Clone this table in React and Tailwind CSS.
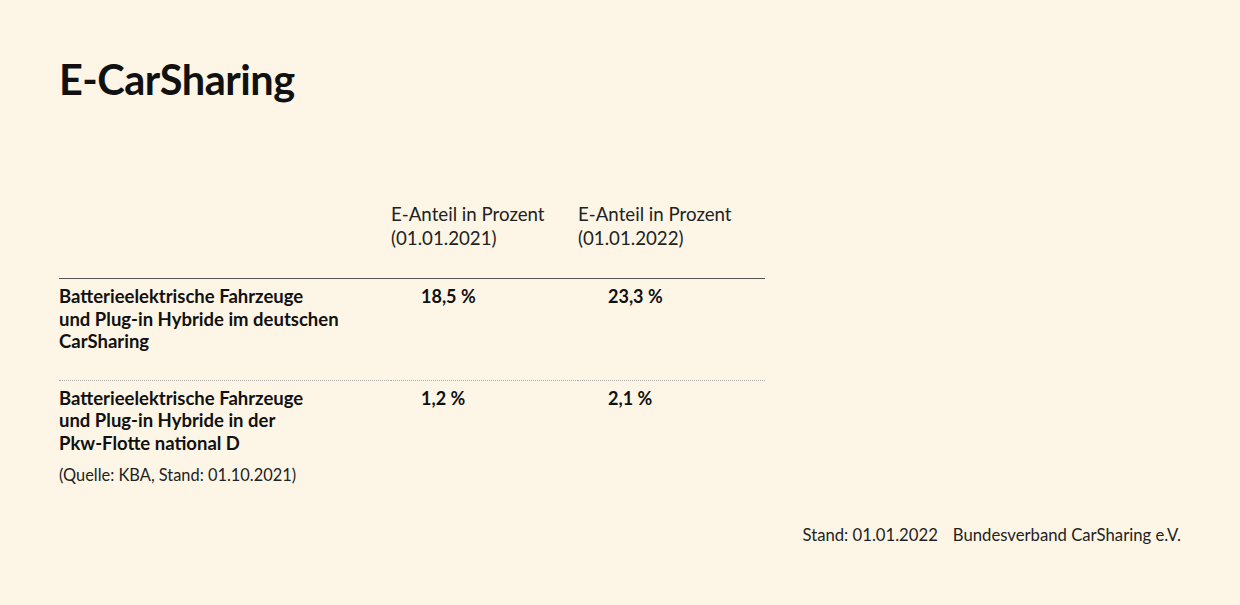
export default function App() {
  const font = { fontFamily: "Lato, 'Noto Sans', sans-serif" };
  return (
    <div className="w-full h-[605px] bg-[#fdf6e6] text-[#111] flex flex-col pl-[59px] pr-[59px]" style={font}>
      <h1 className="mt-[53px] text-[41.5px] leading-[52px] font-bold tracking-[-0.5px]">E-CarSharing</h1>
      <div className="mt-[97px] w-[706px] grid grid-cols-[332px_187px_187px]">
        <div className="border-b border-[#555] pb-[28px]"></div>
        <div className="border-b border-[#555] pb-[28px] text-[18.7px] leading-[24px] text-[#222]">
          E-Anteil in Prozent<br />(01.01.2021)
        </div>
        <div className="border-b border-[#555] pb-[28px] text-[18.7px] leading-[24px] text-[#222]">
          E-Anteil in Prozent<br />(01.01.2022)
        </div>

        <div className="pt-[6px] pb-[27px] border-b border-dotted border-[#aaa] text-[18.5px] leading-[22.5px] font-bold">
          Batterieelektrische Fahrzeuge<br />und Plug-in Hybride im deutschen<br />CarSharing
        </div>
        <div className="pt-[6px] pb-[27px] border-b border-dotted border-[#aaa] pl-[30px] text-[18px] leading-[22.5px] font-bold">
          18,5&#8239;%
        </div>
        <div className="pt-[6px] pb-[27px] border-b border-dotted border-[#aaa] pl-[30px] text-[18px] leading-[22.5px] font-bold">
          23,3&#8239;%
        </div>

        <div className="pt-[6px] text-[18.5px] leading-[22.5px] font-bold">
          Batterieelektrische Fahrzeuge<br />und Plug-in Hybride in der<br />Pkw-Flotte national D
        </div>
        <div className="pt-[6px] pl-[30px] text-[18px] leading-[22.5px] font-bold">1,2&#8239;%</div>
        <div className="pt-[6px] pl-[30px] text-[18px] leading-[22.5px] font-bold">2,1&#8239;%</div>
      </div>
      <p className="mt-[10px] text-[16.4px] leading-[22px] text-[#222]">(Quelle: KBA, Stand: 01.10.2021)</p>
      <div className="mt-[38px] flex justify-end gap-[15px] text-[16.7px] leading-[22px] text-[#222]">
        <span>Stand: 01.01.2022</span>
        <span>Bundesverband CarSharing e.V.</span>
      </div>
    </div>
  );
}
